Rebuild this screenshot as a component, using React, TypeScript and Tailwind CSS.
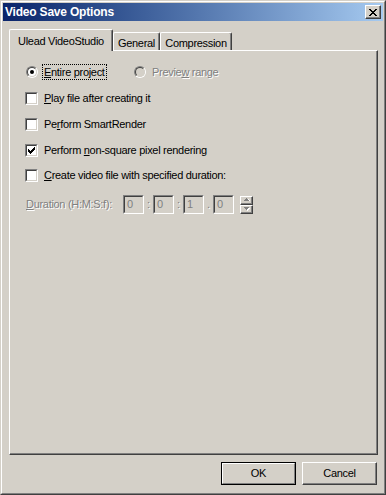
import React from "react";

// classic win2k style dialog
const disabledText = "text-[#808080] [text-shadow:1px_1px_0_#ffffff]";

function CheckBox({ checked }: { checked?: boolean }) {
  return (
    <div className="w-[13px] h-[13px] shrink-0 border border-t-[#808080] border-l-[#808080] border-r-white border-b-white">
      <div className="w-full h-full border border-t-[#404040] border-l-[#404040] border-r-[#d4d0c8] border-b-[#d4d0c8] bg-white flex items-center justify-center">
        {checked && (
          <svg width="7" height="7" viewBox="0 0 7 7" shapeRendering="crispEdges">
            <rect x="0" y="2" width="1" height="3" fill="#000" />
            <rect x="1" y="3" width="1" height="3" fill="#000" />
            <rect x="2" y="4" width="1" height="3" fill="#000" />
            <rect x="3" y="3" width="1" height="3" fill="#000" />
            <rect x="4" y="2" width="1" height="3" fill="#000" />
            <rect x="5" y="1" width="1" height="3" fill="#000" />
            <rect x="6" y="0" width="1" height="3" fill="#000" />
          </svg>
        )}
      </div>
    </div>
  );
}

function Radio({ checked, disabled }: { checked?: boolean; disabled?: boolean }) {
  return (
    <div className="w-[12px] h-[12px] shrink-0 rounded-full border border-t-[#808080] border-l-[#808080] border-r-white border-b-white">
      <div
        className={
          "w-full h-full rounded-full border border-t-[#404040] border-l-[#404040] border-r-[#d4d0c8] border-b-[#d4d0c8] flex items-center justify-center " +
          (disabled ? "bg-[#d4d0c8]" : "bg-white")
        }
      >
        {checked && <div className="w-[4px] h-[4px] rounded-full bg-black" />}
      </div>
    </div>
  );
}

function Field({ value }: { value: string }) {
  return (
    <div className="w-[21px] h-[19px] shrink-0 border border-t-[#808080] border-l-[#808080] border-r-white border-b-white">
      <div className="w-full h-full border border-t-[#404040] border-l-[#404040] border-r-[#d4d0c8] border-b-[#d4d0c8] bg-[#d4d0c8] pl-[2px] text-[#808080] leading-[15px]">
        {value}
      </div>
    </div>
  );
}

function Sep({ ch }: { ch: string }) {
  return <div className={"w-[9px] text-center shrink-0 " + disabledText}>{ch}</div>;
}

function SpinHalf({ up }: { up?: boolean }) {
  return (
    <div className="w-[13px] h-[9px] border border-t-white border-l-white border-r-[#404040] border-b-[#404040] shadow-[inset_-1px_-1px_0_#808080] flex items-center justify-center">
      <svg width="6" height="4" viewBox="0 0 6 4" shapeRendering="crispEdges">
        {up ? (
          <>
            <path d="M3 1h2v1h1v1H1V2h1V1z" fill="#ffffff" />
            <path d="M2 0h1v1h1v1h1v1H0V2h1V1h1z" fill="#808080" />
          </>
        ) : (
          <>
            <path d="M1 1h5v1H5v1H4v1H3V3H2V2H1z" fill="#ffffff" />
            <path d="M0 0h5v1H4v1H3v1H2V2H1V1H0z" fill="#808080" />
          </>
        )}
      </svg>
    </div>
  );
}

export default function App() {
  return (
    <div className="w-[386px] h-[495px] bg-[#d4d0c8] font-['Liberation_Sans',Arial,sans-serif] text-[11px] tracking-[-0.3px] text-black border border-t-[#d4d0c8] border-l-[#d4d0c8] border-r-[#404040] border-b-[#404040]">
      <div className="h-full border border-t-white border-l-white border-r-[#808080] border-b-[#808080] p-px flex flex-col">
        {/* title bar */}
        <div className="h-[18px] shrink-0 flex items-center justify-between pl-[2px] pr-[2px] bg-linear-to-r from-[#0a246a] to-[#a6caf0]">
          <span className="text-white font-bold text-[12px] tracking-[-0.2px]">Video Save Options</span>
          <div className="w-[16px] h-[14px] bg-[#d4d0c8] border border-t-white border-l-white border-r-[#404040] border-b-[#404040] shadow-[inset_-1px_-1px_0_#808080] flex items-center justify-center">
            <svg width="8" height="7" viewBox="0 0 8 7" shapeRendering="crispEdges">
              <path d="M0 0h2v1h1v1h2V1h1V0h2v1H7v1H6v1H5v1h1v1h1v1h1v1H6V6H5V5H3v1H2v1H0V6h1V5h1V4h1V3H2V2H1V1H0z" fill="#000" />
            </svg>
          </div>
        </div>

        {/* tabs */}
        <div className="ml-[6px] mt-[8px] w-[369px]">
          <div className="flex items-end h-[21px] relative z-10">
            <div className="h-[22px] -mb-px w-[104px] bg-[#d4d0c8] rounded-t-[2px] border-t border-l border-r border-t-white border-l-white border-r-[#404040] shadow-[inset_-1px_0_0_#808080] flex justify-center pt-[3px]">
              Ulead VideoStudio
            </div>
            <div className="h-[18px] w-[47px] rounded-t-[2px] border-t border-l border-r border-t-white border-l-white border-r-[#404040] shadow-[inset_-1px_0_0_#808080] flex justify-center pt-[2px]">
              General
            </div>
            <div className="h-[18px] w-[72px] rounded-t-[2px] border-t border-l border-r border-t-white border-l-white border-r-[#404040] shadow-[inset_-1px_0_0_#808080] flex justify-center pt-[2px]">
              Compression
            </div>
          </div>

          <div className="h-[405px] border border-t-white border-l-white border-r-[#404040] border-b-[#404040] shadow-[inset_-1px_-1px_0_#808080] flex flex-col">
            {/* radios */}
            <div className="mt-[13px] h-[16px] flex items-center">
              <div className="w-[108px] ml-[16px] flex items-center shrink-0">
                <Radio checked />
                <div className="ml-[4px] h-[16px] px-px border border-dotted border-black flex items-center">
                  <span>
                    <span className="underline">E</span>ntire project
                  </span>
                </div>
              </div>
              <Radio disabled />
              <span className={"ml-[6px] " + disabledText}>
                Previe<span className="underline">w</span> range
              </span>
            </div>

            <div className="mt-[10px] h-[16px] flex items-center ml-[15px]">
              <CheckBox />
              <span className="ml-[6px]">
                <span className="underline">P</span>lay file after creating it
              </span>
            </div>

            <div className="mt-[10px] h-[16px] flex items-center ml-[15px]">
              <CheckBox />
              <span className="ml-[6px]">
                Pe<span className="underline">r</span>form SmartRender
              </span>
            </div>

            <div className="mt-[10px] h-[16px] flex items-center ml-[15px]">
              <CheckBox checked />
              <span className="ml-[6px]">
                Perform <span className="underline">n</span>on-square pixel rendering
              </span>
            </div>

            <div className="mt-[9px] h-[16px] flex items-center ml-[15px]">
              <CheckBox />
              <span className="ml-[6px]">
                <span className="underline">C</span>reate video file with specified duration:
              </span>
            </div>

            <div className="mt-[12px] h-[19px] flex items-center ml-[16px]">
              <div className={"w-[97px] shrink-0 " + disabledText}>
                <span className="underline">D</span>uration (H:M:S:f):
              </div>
              <Field value="0" />
              <Sep ch=":" />
              <Field value="0" />
              <Sep ch=":" />
              <Field value="1" />
              <Sep ch="." />
              <Field value="0" />
              <div className="ml-[6px] flex flex-col bg-[#d4d0c8]">
                <SpinHalf up />
                <SpinHalf />
              </div>
            </div>
          </div>
        </div>

        {/* buttons */}
        <div className="mt-[7px] flex justify-end gap-[6px] pr-[6px]">
          <div className="w-[75px] h-[23px] border border-black">
            <div className="w-full h-full border border-t-white border-l-white border-r-[#808080] border-b-[#808080] flex items-center justify-center">
              OK
            </div>
          </div>
          <div className="w-[75px] h-[23px] border border-t-white border-l-white border-r-[#404040] border-b-[#404040] shadow-[inset_-1px_-1px_0_#808080] flex items-center justify-center">
            Cancel
          </div>
        </div>
      </div>
    </div>
  );
}
